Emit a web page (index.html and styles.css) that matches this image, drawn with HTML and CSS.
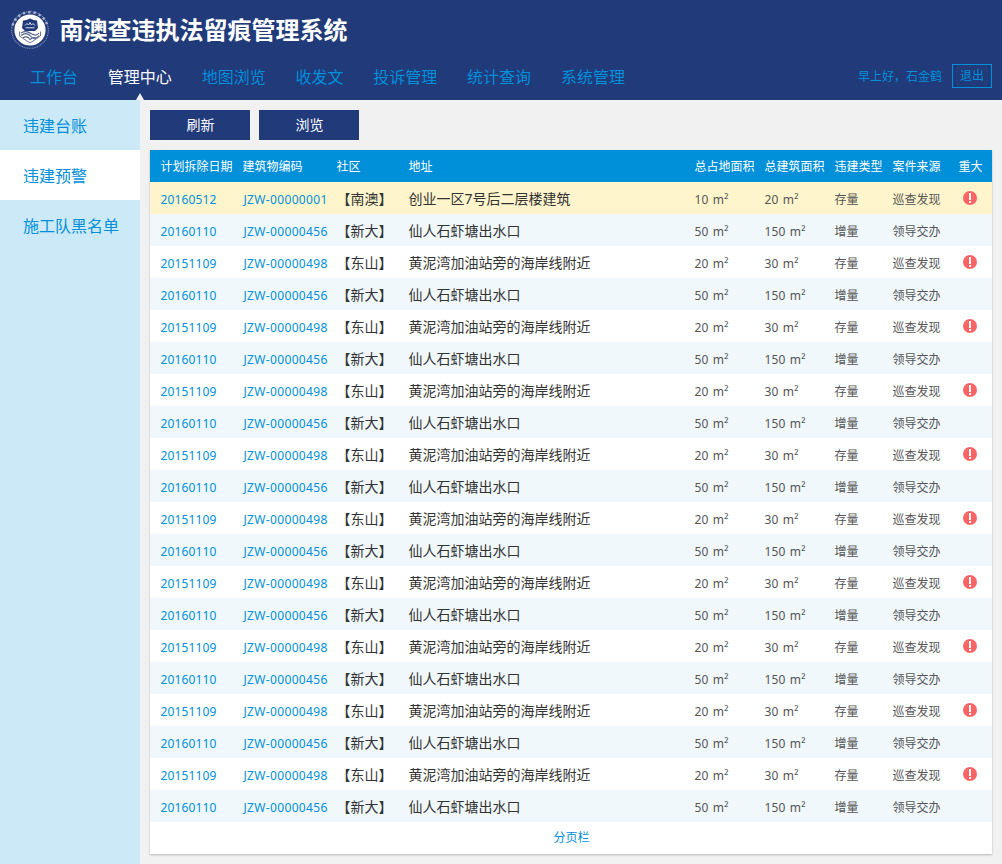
FILE: index.html
```html
<!DOCTYPE html>
<html lang="zh-CN">
<head>
<meta charset="utf-8">
<title>南澳查违执法留痕管理系统</title>
<link rel="stylesheet" href="styles.css">
</head>
<body>
<header class="header">
  <div class="brand">
    <svg class="logo" viewBox="0 0 40 40" width="40" height="40">
      <circle cx="20" cy="20" r="18.3" fill="none" stroke="#8794bb" stroke-width="1.1" stroke-dasharray="1 .7"/>
      <path d="M2.600 15.500A18 18 0 0 1 37.400 15.500" fill="none" stroke="#a5b0cd" stroke-width="2.600" stroke-dasharray="2.400 3"/>
      <circle cx="20" cy="20" r="15.600" fill="#fff"/>
      <path d="M13 10.500q3.500 0 7-2 3.500 2 7 2l1 7.500-3 3h-10l-3-3z" fill="#213a7a"/>
      <path d="M15 15.500l2-2 1.500 1.500 1.500-2.500 1.500 2.500 1.500-1.500 2 2M15.500 17.800h9" fill="none" stroke="#dfe5f0" stroke-width="1"/>
      <path d="M11 23q5-3 10 .5t8-.5M11 25.500q6-4 10 1t8-1M13 28q4-3 7 1.500 3-3 7-1.500" fill="none" stroke="#53658f" stroke-width="1.200"/>
      <path d="M9.500 21.500v4.500l10.500 7 10.500-7v-4.500" fill="none" stroke="#6b7a9f" stroke-width="1"/>
    </svg>
    <h1 class="title">南澳查违执法留痕管理系统</h1>
  </div>
  <div class="bar">
    <nav class="nav">
      <a>工作台</a><a class="active">管理中心</a><a>地图浏览</a><a>收发文</a><a>投诉管理</a><a>统计查询</a><a>系统管理</a>
    </nav>
    <div class="user"><span>早上好，石金鹤</span><a class="logout">退出</a></div>
  </div>
</header>
<div class="layout">
  <aside class="sidebar">
    <a>违建台账</a>
    <a class="current">违建预警</a>
    <a>施工队黑名单</a>
  </aside>
  <main class="main">
    <div class="actions"><button>刷新</button><button>浏览</button></div>
    <section class="panel">
      <table class="grid">
        <colgroup><col class="c-date"><col class="c-code"><col class="c-area"><col class="c-addr"><col class="c-size"><col class="c-size"><col class="c-type"><col class="c-source"><col class="c-major"></colgroup>
        <thead><tr><th>计划拆除日期</th><th>建筑物编码</th><th>社区</th><th>地址</th><th>总占地面积</th><th>总建筑面积</th><th>违建类型</th><th>案件来源</th><th>重大</th></tr></thead>
        <tbody>
          <tr class="selected"><td>20160512</td><td>JZW-00000001</td><td>【南澳】</td><td>创业一区7号后二层楼建筑</td><td>10 m²</td><td>20 m²</td><td>存量</td><td>巡查发现</td><td><i class="alert"></i></td></tr>
          <tr><td>20160110</td><td>JZW-00000456</td><td>【新大】</td><td>仙人石虾塘出水口</td><td>50 m²</td><td>150 m²</td><td>增量</td><td>领导交办</td><td></td></tr>
          <tr><td>20151109</td><td>JZW-00000498</td><td>【东山】</td><td>黄泥湾加油站旁的海岸线附近</td><td>20 m²</td><td>30 m²</td><td>存量</td><td>巡查发现</td><td><i class="alert"></i></td></tr>
          <tr><td>20160110</td><td>JZW-00000456</td><td>【新大】</td><td>仙人石虾塘出水口</td><td>50 m²</td><td>150 m²</td><td>增量</td><td>领导交办</td><td></td></tr>
          <tr><td>20151109</td><td>JZW-00000498</td><td>【东山】</td><td>黄泥湾加油站旁的海岸线附近</td><td>20 m²</td><td>30 m²</td><td>存量</td><td>巡查发现</td><td><i class="alert"></i></td></tr>
          <tr><td>20160110</td><td>JZW-00000456</td><td>【新大】</td><td>仙人石虾塘出水口</td><td>50 m²</td><td>150 m²</td><td>增量</td><td>领导交办</td><td></td></tr>
          <tr><td>20151109</td><td>JZW-00000498</td><td>【东山】</td><td>黄泥湾加油站旁的海岸线附近</td><td>20 m²</td><td>30 m²</td><td>存量</td><td>巡查发现</td><td><i class="alert"></i></td></tr>
          <tr><td>20160110</td><td>JZW-00000456</td><td>【新大】</td><td>仙人石虾塘出水口</td><td>50 m²</td><td>150 m²</td><td>增量</td><td>领导交办</td><td></td></tr>
          <tr><td>20151109</td><td>JZW-00000498</td><td>【东山】</td><td>黄泥湾加油站旁的海岸线附近</td><td>20 m²</td><td>30 m²</td><td>存量</td><td>巡查发现</td><td><i class="alert"></i></td></tr>
          <tr><td>20160110</td><td>JZW-00000456</td><td>【新大】</td><td>仙人石虾塘出水口</td><td>50 m²</td><td>150 m²</td><td>增量</td><td>领导交办</td><td></td></tr>
          <tr><td>20151109</td><td>JZW-00000498</td><td>【东山】</td><td>黄泥湾加油站旁的海岸线附近</td><td>20 m²</td><td>30 m²</td><td>存量</td><td>巡查发现</td><td><i class="alert"></i></td></tr>
          <tr><td>20160110</td><td>JZW-00000456</td><td>【新大】</td><td>仙人石虾塘出水口</td><td>50 m²</td><td>150 m²</td><td>增量</td><td>领导交办</td><td></td></tr>
          <tr><td>20151109</td><td>JZW-00000498</td><td>【东山】</td><td>黄泥湾加油站旁的海岸线附近</td><td>20 m²</td><td>30 m²</td><td>存量</td><td>巡查发现</td><td><i class="alert"></i></td></tr>
          <tr><td>20160110</td><td>JZW-00000456</td><td>【新大】</td><td>仙人石虾塘出水口</td><td>50 m²</td><td>150 m²</td><td>增量</td><td>领导交办</td><td></td></tr>
          <tr><td>20151109</td><td>JZW-00000498</td><td>【东山】</td><td>黄泥湾加油站旁的海岸线附近</td><td>20 m²</td><td>30 m²</td><td>存量</td><td>巡查发现</td><td><i class="alert"></i></td></tr>
          <tr><td>20160110</td><td>JZW-00000456</td><td>【新大】</td><td>仙人石虾塘出水口</td><td>50 m²</td><td>150 m²</td><td>增量</td><td>领导交办</td><td></td></tr>
          <tr><td>20151109</td><td>JZW-00000498</td><td>【东山】</td><td>黄泥湾加油站旁的海岸线附近</td><td>20 m²</td><td>30 m²</td><td>存量</td><td>巡查发现</td><td><i class="alert"></i></td></tr>
          <tr><td>20160110</td><td>JZW-00000456</td><td>【新大】</td><td>仙人石虾塘出水口</td><td>50 m²</td><td>150 m²</td><td>增量</td><td>领导交办</td><td></td></tr>
          <tr><td>20151109</td><td>JZW-00000498</td><td>【东山】</td><td>黄泥湾加油站旁的海岸线附近</td><td>20 m²</td><td>30 m²</td><td>存量</td><td>巡查发现</td><td><i class="alert"></i></td></tr>
          <tr><td>20160110</td><td>JZW-00000456</td><td>【新大】</td><td>仙人石虾塘出水口</td><td>50 m²</td><td>150 m²</td><td>增量</td><td>领导交办</td><td></td></tr>
        </tbody>
      </table>
      <div class="pager">分页栏</div>
    </section>
  </main>
</div>
</body>
</html>
```
FILE: styles.css
```css
* { box-sizing: border-box; }
body {
  margin: 0;
  height: 864px;
  overflow: hidden;
  background: #f1f1f1;
  color: #333;
  font: 12px/1.2 "Noto Sans", "Noto Sans CJK SC", sans-serif;
}
.header { height: 100px; background: #213a7a; }
.brand { display: flex; align-items: center; height: 60px; padding-left: 10px; }
.title {
  margin: 0 0 2px 9.500px;
  color: #fff;
  font: bold 24px/36px "Noto Sans CJK SC", sans-serif;
}
.bar { display: flex; justify-content: space-between; height: 40px; padding: 0 10px 0 30px; color: #008fd9; }
.nav { display: flex; gap: 29.8px; font-size: 16px; line-height: 34px; }
.nav .active { position: relative; color: #fff; }
.nav .active::after {
  content: "";
  position: absolute;
  left: 50%;
  bottom: 0;
  margin-left: -4px;
  border: 4px solid transparent;
  border-top: 0;
  border-bottom: 7px solid #f1f1f1;
}
.user { display: flex; gap: 10px; line-height: 34px; }
.logout {
  width: 40px;
  height: 24px;
  margin-top: 4px;
  border: 1px solid #008fd9;
  line-height: 22px;
  text-align: center;
}
.layout { display: flex; height: 764px; }
.sidebar { width: 140px; background: #cce9f7; }
.sidebar a { display: block; height: 50px; padding: 1px 0 0 23px; color: #008fd9; font-size: 16px; line-height: 50px; }
.sidebar .current { background: #fff; }
.main { flex: 1; padding: 10px; }
.actions { display: flex; gap: 9px; margin-bottom: 10px; }
.actions button {
  width: 100px;
  height: 30px;
  padding: 0 0 1px 1px;
  border: 0;
  background: #213a7a;
  color: #fff;
  font: 14px/29px "Noto Sans CJK SC", sans-serif;
}
.panel { background: #fff; box-shadow: 0 1px 2px rgba(0, 0, 30, .25); }
.grid { width: 842px; border-collapse: collapse; table-layout: fixed; }
.c-date { width: 82px; }
.c-code { width: 94px; }
.c-area { width: 72px; }
.c-addr { width: 286px; }
.c-size { width: 70px; }
.c-type { width: 58px; }
.c-source { width: 66px; }
.c-major { width: 44px; }
.grid th, .grid td { height: 32px; padding: 2px 0 0 10.5px; text-align: left; white-space: nowrap; line-height: 18px; }
.grid th { background: #008fd9; color: #fff; font-weight: normal; }
.grid td { padding-top: 4px; color: #555; }
.grid tbody tr:nth-child(even) { background: #f0f8fc; }
.grid tbody .selected { background: #fff5cc; }
.grid td:nth-child(-n+2) { color: #008fd9; letter-spacing: .14px; }
.grid td:nth-child(2) { padding-left: 11.5px; letter-spacing: .34px; }
.grid td:nth-child(3), .grid td:nth-child(4) { padding-top: 2px; color: #333; font-size: 14px; }
.grid td:nth-child(5), .grid td:nth-child(6) { letter-spacing: .14px; word-spacing: 1px; }
.grid td:last-child { padding: 0 0 0 15px; }
.alert {
  display: flex;
  flex-direction: column;
  align-items: center;
  gap: 1px;
  width: 14px;
  height: 14px;
  padding-top: 2px;
  border-radius: 50%;
  background: #ff6464;
}
.alert::before, .alert::after { content: ""; width: 2px; height: 7px; background: #fff; }
.alert::after { height: 2px; }
.pager { height: 32px; padding-left: 1px; color: #008fd9; line-height: 32px; text-align: center; }
```
